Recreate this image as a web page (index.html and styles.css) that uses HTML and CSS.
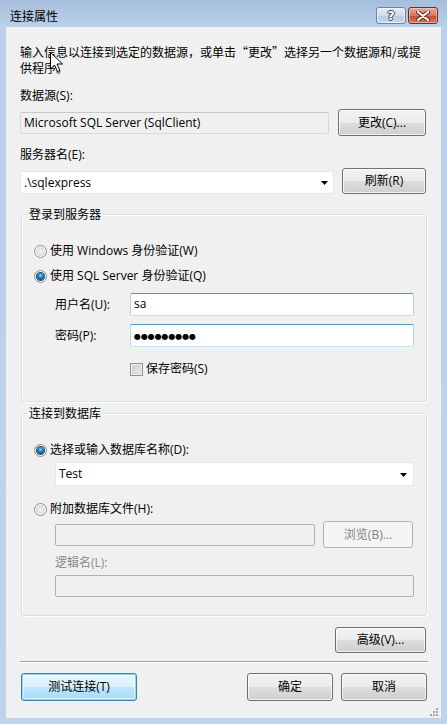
FILE: index.html
```html
<!DOCTYPE html>
<html lang="zh-CN">
<head>
<meta charset="utf-8">
<title>连接属性</title>
<link rel="stylesheet" href="styles.css">
</head>
<body>
<div class="window">
  <div class="titlebar">
    <div class="title">连接属性</div>
    <div class="caption-btns">
      <div class="cap-btn help">?</div>
      <div class="cap-btn close">
        <svg width="14" height="10" viewBox="0 0 14 10"><path d="M2 1 L12 9 M12 1 L2 9" stroke="#5a2620" stroke-width="4" stroke-linecap="round"/><path d="M2 1 L12 9 M12 1 L2 9" stroke="#fff" stroke-width="2.2" stroke-linecap="round"/></svg>
      </div>
    </div>
  </div>
  <div class="client">
    <p class="desc">输入信息以连接到选定的数据源，或单击“更改”选择另一个数据源和/或提供程序。</p>
    <div class="label lbl-ds">数据源(S):</div>
    <div class="row row-ds">
      <div class="textbox readonly ds-box">Microsoft SQL Server (SqlClient)</div>
      <div class="btn btn-change">更改(C)...</div>
    </div>
    <div class="label lbl-server">服务器名(E):</div>
    <div class="row row-server">
      <div class="combo server-combo"><span class="combo-text">.\sqlexpress</span><svg class="arrow" width="7" height="4" viewBox="0 0 7 4"><path d="M0 0 H7 L3.5 4 Z" fill="#000"/></svg></div>
      <div class="btn btn-refresh">刷新(R)</div>
    </div>

    <fieldset class="group group-login">
      <legend>登录到服务器</legend>
      <div class="radio-row">
        <span class="radio"></span><span>使用 Windows 身份验证(W)</span>
      </div>
      <div class="radio-row second">
        <span class="radio checked"></span><span>使用 SQL Server 身份验证(Q)</span>
      </div>
      <div class="field-row user-row">
        <span class="field-label">用户名(U):</span>
        <div class="textbox hot cred-box">sa</div>
      </div>
      <div class="field-row pass-row">
        <span class="field-label">密码(P):</span>
        <div class="textbox hot cred-box"><span class="pw">●●●●●●●●●</span></div>
      </div>
      <div class="check-row">
        <span class="checkbox"></span><span>保存密码(S)</span>
      </div>
    </fieldset>

    <fieldset class="group group-db">
      <legend>连接到数据库</legend>
      <div class="radio-row">
        <span class="radio checked"></span><span>选择或输入数据库名称(D):</span>
      </div>
      <div class="combo db-combo"><span class="combo-text">Test</span><svg class="arrow" width="7" height="4" viewBox="0 0 7 4"><path d="M0 0 H7 L3.5 4 Z" fill="#000"/></svg></div>
      <div class="radio-row attach-row">
        <span class="radio"></span><span>附加数据库文件(H):</span>
      </div>
      <div class="file-row">
        <div class="textbox disabled file-box"></div>
        <div class="btn disabled-btn btn-browse">浏览(B)...</div>
      </div>
      <div class="label disabled-text lbl-logical">逻辑名(L):</div>
      <div class="textbox disabled logical-box"></div>
    </fieldset>

    <div class="adv-row">
      <div class="btn btn-adv">高级(V)...</div>
    </div>
    <div class="separator"></div>
    <div class="bottom-row">
      <div class="btn default-btn btn-test">测试连接(T)</div>
      <div class="bottom-right">
        <div class="btn btn-ok">确定</div>
        <div class="btn btn-cancel">取消</div>
      </div>
    </div>
    <svg class="grip" width="9" height="9" viewBox="0 0 9 9">
      <g fill="#a7a7a7"><rect x="7" y="1" width="2" height="2"/><rect x="4" y="4" width="2" height="2"/><rect x="7" y="4" width="2" height="2"/><rect x="1" y="7" width="2" height="2"/><rect x="4" y="7" width="2" height="2"/><rect x="7" y="7" width="2" height="2"/></g>
    </svg>
  </div>
  <svg class="cursor" width="13" height="21" viewBox="0 0 13 21"><path d="M0.5 0.5 V17 L4.5 13 L7.5 19.5 L10 18.5 L7 12 H12.5 Z" fill="#fff" stroke="#000" stroke-width="1" stroke-linejoin="round"/></svg>
</div>
</body>
</html>
```

FILE: styles.css
```css
* { box-sizing: border-box; }
html, body { margin: 0; padding: 0; }
body {
  width: 447px;
  height: 724px;
  overflow: hidden;
  font-family: "Open Sans", "Noto Sans CJK SC", sans-serif;
  font-size: 12px;
  line-height: 16px;
  color: #000;
}
.window {
  position: relative;
  width: 447px;
  height: 724px;
  background: linear-gradient(#a6bedb 0px, #b9d1ea 27px, #bdd4ec 100%);
  padding: 0 6px 6px;
  display: flex;
  flex-direction: column;
}
.titlebar {
  height: 27px;
  display: flex;
  align-items: flex-start;
  justify-content: space-between;
}
.title {
  font-family: "Noto Sans CJK SC", sans-serif;
  margin: 8px 0 0 4px;
  color: #000;
}
.caption-btns {
  display: flex;
  gap: 2px;
  margin: 7px 3px 0 0;
}
.cap-btn {
  width: 30px;
  height: 17px;
  border-radius: 3px;
  display: flex;
  align-items: center;
  justify-content: center;
}
.help {
  border: 1px solid #6a85a8;
  background: linear-gradient(#e4edf7, #cddced 50%, #b9cce3 51%, #c8d9ec);
  box-shadow: inset 0 0 0 1px rgba(255,255,255,.6);
  color: #fff;
  font-family: "DejaVu Sans", sans-serif;
  font-weight: bold;
  font-size: 13px;
  text-shadow: -1px 0 #444, 1px 0 #444, 0 -1px #444, 0 1px #444;
}
.close {
  border: 1px solid #6d2c25;
  background: linear-gradient(#e9a99c, #d57563 50%, #c24a35 51%, #d3765f);
  box-shadow: inset 0 0 0 1px rgba(255,220,210,.5);
}
.client {
  position: relative;
  flex: 1;
  background: #f0f0f0;
  padding: 17px 14px 0 14px;
}
.desc {
  margin: 0;
  font-family: "Noto Sans CJK SC", sans-serif;
  line-height: 16px;
}
.label { height: 16px; }
.lbl-ds { margin-top: 12px; }
.lbl-server { margin-top: 11px; }
.row { display: flex; gap: 9px; }
.row-ds { margin-top: 5px; height: 27px; align-items: center; }
.row-server { margin-top: 5px; height: 26px; align-items: flex-end; gap: 8px; }

.textbox {
  height: 22px;
  border: 1px solid #e2e3ea;
  border-top-color: #abadb3;
  border-bottom-color: #e3e9ef;
  background: #fff;
  border-radius: 2px;
  padding: 2px 2px 0 3px;
  line-height: 16px;
  white-space: nowrap;
}
.readonly {
  background: #f0f0f0;
  border-color: #d9d9d9;
  border-top-color: #c8c8c8;
}
.ds-box { width: 309px; }
.hot {
  border-color: #b7d5ea;
  border-top-color: #5794bf;
  border-bottom-color: #c7e2f1;
}
.disabled {
  background: #f0f0f0;
  border: 1px solid #adb2b5;
}
.combo {
  height: 23px;
  background: #fff;
  border: 1px solid #e3e6ec;
  border-radius: 2px;
  display: flex;
  align-items: center;
  justify-content: space-between;
  padding: 0 5px 0 3px;
}
.server-combo { width: 314px; }
.combo-text { line-height: 16px; }
.arrow { display: block; margin-top: 1px; }

.btn {
  height: 27px;
  border: 1px solid #707070;
  border-radius: 3px;
  background: linear-gradient(#f2f2f2, #ebebeb 50%, #dddddd 51%, #cfcfcf);
  box-shadow: inset 0 0 0 1px rgba(255,255,255,.75);
  display: flex;
  align-items: center;
  justify-content: center;
  white-space: nowrap;
}
.btn-change { width: 88px; }
.btn-refresh { width: 84px; height: 26px; }
.default-btn {
  border-color: #3c7fb1;
  background: linear-gradient(#eaf6fd, #d9f0fc 50%, #bee6fd 51%, #a7d9f5);
  box-shadow: inset 0 0 0 1px #8fd8fa, inset 0 0 0 2px rgba(255,255,255,.5);
}
.disabled-btn {
  border-color: #adb2b5;
  background: #f4f4f4;
  box-shadow: none;
  color: #838383;
}

.group {
  margin: 0;
  padding: 0 12px 0 12px;
  border: 1px solid #d5dfe5;
  border-radius: 3px;
  box-shadow: inset 1px 1px 0 #fff, 1px 1px 0 #fff;
  min-width: 0;
  margin-left: 1px;
}
.group legend {
  padding: 0 2px;
  margin-left: -7px;
  line-height: 16px;
  font-family: "Noto Sans CJK SC", sans-serif;
}
.group-login { margin-top: 12px; padding-top: 21px; padding-bottom: 24px; }
.group-db { margin-top: 3px; padding-top: 21px; padding-bottom: 18px; }

.radio-row {
  display: flex;
  align-items: center;
  height: 16px;
}
.radio-row.second { margin-top: 9px; }
.radio {
  width: 13px;
  height: 13px;
  border-radius: 50%;
  margin-right: 3px;
  border: 1px solid #8e8f8f;
  background: radial-gradient(circle at 50% 50%, #f4f4f4 0, #e2e2e2 3px, #d3d3d3 5px, #f2f2f2 6px);
  box-shadow: inset 0 0 0 1px #fff;
  position: relative;
}
.radio.checked::after {
  content: "";
  position: absolute;
  left: 2px;
  top: 2px;
  width: 7px;
  height: 7px;
  border-radius: 50%;
  background: radial-gradient(circle at 50% 35%, #8fd4f7 0, #2a8ed0 2px, #0f4f8a 4px);
  box-shadow: 0 0 0 1px #1f486f;
}
.field-row {
  display: flex;
  align-items: center;
  height: 23px;
  padding-left: 21px;
}
.user-row { margin-top: 9px; }
.pass-row { margin-top: 8px; }
.field-label { width: 75px; }
.cred-box { width: 284px; height: 23px; }
.pw {
  font-family: "DejaVu Sans", sans-serif;
  font-size: 8px;
  letter-spacing: -0.1px;
}
.check-row {
  display: flex;
  align-items: center;
  height: 16px;
  margin-top: 14px;
  padding-left: 96px;
}
.checkbox {
  width: 13px;
  height: 13px;
  margin-right: 3px;
  border: 1px solid #8f8f8f;
  background: linear-gradient(135deg, #c6c6c6, #f3f3f3);
  box-shadow: inset 0 0 0 1px #f4f4f4, inset 0 0 0 2px #d2d2d2;
}

.db-combo { width: 359px; height: 24px; margin-top: 4px; margin-left: 21px; padding-right: 6px; }
.attach-row { margin-top: 15px; }
.file-row {
  display: flex;
  align-items: center;
  gap: 8px;
  height: 27px;
  margin-top: 4px;
  margin-left: 21px;
}
.file-box { width: 260px; }
.btn-browse { width: 90px; }
.disabled-text { color: #8a8a8a; }
.lbl-logical { margin-top: 7px; margin-left: 21px; }
.logical-box { width: 359px; margin-top: 4px; margin-left: 21px; }

.adv-row {
  display: flex;
  justify-content: flex-end;
  margin-top: 11px;
}
.btn-adv { width: 91px; height: 26px; margin-right: 1px; }
.separator {
  height: 1px;
  margin-top: 8px;
  margin-right: -1px;
  background: #a0a0a0;
  box-shadow: 0 1px 0 #fff;
}
.bottom-row {
  display: flex;
  justify-content: space-between;
  margin-top: 11px;
}
.bottom-right { display: flex; gap: 8px; }
.bottom-row .btn { height: 28px; }
.btn-test { width: 116px; margin-left: 1px; }
.btn-ok, .btn-cancel { width: 86px; }

.grip {
  position: absolute;
  right: 3px;
  bottom: 2px;
}
.cursor {
  position: absolute;
  left: 50px;
  top: 52px;
}
```
